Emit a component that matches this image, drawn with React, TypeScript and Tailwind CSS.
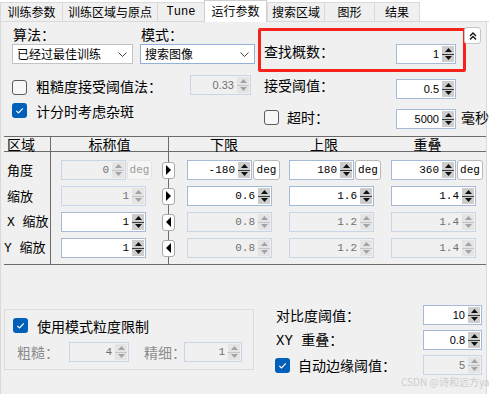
import React from "react";

const CJK = "font-['Noto_Sans_CJK_SC','Noto_Sans',sans-serif]";
const MONO = "font-['Liberation_Mono','Noto_Sans_CJK_SC',monospace]";
const LAT = "font-['Liberation_Sans','Noto_Sans_CJK_SC',sans-serif]";

function Tri({ up, off }: { up?: boolean; off?: boolean }) {
  return (
    <svg width="7" height="4" viewBox="0 0 7 4" className="block">
      <polygon points={up ? "0,4 3.5,0 7,4" : "0,0 7,0 3.5,4"} fill={off ? "#a3a3a3" : "#111"} />
    </svg>
  );
}

function SpinBtns({ off }: { off?: boolean }) {
  return (
    <div className={`mr-[1px] flex h-[16px] w-[12px] shrink-0 flex-col ${off ? "bg-[#e4e4e4]" : "bg-[#cdcdcd]"}`}>
      <div className="flex flex-1 items-center justify-center">
        <Tri up off={off} />
      </div>
      <div className={`h-px ${off ? "bg-[#c4c4c4]" : "bg-[#3c3c3c]"}`} />
      <div className="flex flex-1 items-center justify-center">
        <Tri off={off} />
      </div>
    </div>
  );
}

function Spin({ v, w, off, mono }: { v: string; w: string; off?: boolean; mono?: boolean }) {
  return (
    <div
      className={`flex h-[20px] shrink-0 items-center border ${w} ${
        off ? "border-[#c8d5e8] bg-[#f0f0f0] text-[#707070]" : "border-[#a5bad6] bg-white text-black"
      }`}
    >
      <span className={`flex-1 pr-[3px] text-right text-[11px] leading-none ${mono ? MONO : LAT}`}>{v}</span>
      <SpinBtns off={off} />
    </div>
  );
}

function Check({ on }: { on?: boolean }) {
  if (on) {
    return (
      <div className="flex h-[15px] w-[15px] shrink-0 items-center justify-center rounded-[3px] bg-[#005fb8]">
        <svg width="11" height="11" viewBox="0 0 11 11">
          <path d="M2.3 5.9 L4.5 8 L8.8 3.3" fill="none" stroke="#fff" strokeWidth="1.2" />
        </svg>
      </div>
    );
  }
  return <div className="h-[15px] w-[15px] shrink-0 rounded-[3px] border border-[#5b5b5b] bg-[#f7f7f7]" />;
}

function Combo({ text, w, focus }: { text: string; w: string; focus?: boolean }) {
  return (
    <div
      className={`flex h-[20px] shrink-0 items-center border bg-white pl-[4px] pr-[5px] ${w} ${
        focus ? "border-[#93b1d8]" : "border-[#c3c3c3]"
      }`}
    >
      <span className="flex-1 text-[12px] leading-none">{text}</span>
      <svg width="9" height="5" viewBox="0 0 9 5">
        <polyline points="0.5,0.5 4.5,4.5 8.5,0.5" fill="none" stroke="#444" />
      </svg>
    </div>
  );
}

function Deg({ w, off }: { w: string; off?: boolean }) {
  return (
    <div
      className={`flex h-[20px] shrink-0 items-center justify-center rounded-[3px] border text-[11px] leading-none ${MONO} ${w} ${
        off ? "border-[#e4e4e4] bg-[#f5f5f5] text-[#9a9a9a]" : "border-[#b8b8b8] bg-white text-black"
      }`}
    >
      deg
    </div>
  );
}

function ArrowBtn({ left }: { left?: boolean }) {
  return (
    <div className="-ml-[7px] flex h-[17px] w-[13px] shrink-0 items-center justify-center rounded-[3px] border border-[#a9a9a9] bg-white">
      <svg width="5" height="10" viewBox="0 0 5 10">
        <polygon points={left ? "5,0 0,5 5,10" : "0,0 5,5 0,10"} fill="#000" />
      </svg>
    </div>
  );
}

const tabs = [
  { t: "训练参数", w: "w-[62px]" },
  { t: "训练区域与原点", w: "w-[95px]" },
  { t: "Tune", w: "w-[47px]", mono: true },
  { t: "运行参数", w: "w-[63px]", on: true },
  { t: "搜索区域", w: "w-[57px]" },
  { t: "图形", w: "w-[50px]" },
  { t: "结果", w: "w-[46px]", last: true },
];

export default function App() {
  return (
    <div className={`relative h-[394px] w-[489px] overflow-hidden bg-white text-black ${CJK}`}>
      {/* tab strip */}
      <div className="flex h-[22px] items-end border-b border-[#d9d9d9]">
        {tabs.map((tab) =>
          tab.on ? (
            <div
              key={tab.t}
              className={`-mb-px flex h-[22px] shrink-0 items-center justify-center border-x border-t border-[#cfcfcf] bg-white pb-[2px] text-[12px] ${tab.w}`}
            >
              {tab.t}
            </div>
          ) : (
            <div
              key={tab.t}
              className={`flex h-[19px] shrink-0 items-center justify-center border-l border-t border-[#dadada] bg-[#f0f0f0] text-[12px] ${
                tab.last ? "border-r" : ""
              } ${tab.mono ? `${MONO} text-[10px]` : ""} ${tab.w}`}
            >
              {tab.t}
            </div>
          )
        )}
      </div>

      {/* page */}
      <div className="h-[372px] w-[487px] border-x border-[#d9d9d9] bg-[#f0f0f0]">
        <div className="flex h-[114px]">
          {/* left */}
          <div className="w-[256px] shrink-0">
            <div className="mt-[4px] flex h-[16px] text-[14px] leading-[16px]">
              <span className="ml-[12px] w-[128px] shrink-0">算法：</span>
              <span>模式：</span>
            </div>
            <div className="mt-[2px] flex">
              <Combo text="已经过最佳训练" w="ml-[11px] w-[121px]" />
              <Combo text="搜索图像" w="ml-[7px] w-[115px]" focus />
            </div>
            <div className="mt-[11px] flex h-[20px] items-start">
              <div className="ml-[11px] mt-[5px]">
                <Check />
              </div>
              <span className="ml-[9px] mt-[3px] w-[154px] shrink-0 text-[14px] leading-[16px]">粗糙度接受阈值法：</span>
              <Spin v="0.33" w="w-[61px]" off />
            </div>
            <div className="mt-[8px] flex h-[15px] items-center">
              <div className="ml-[11px]">
                <Check on />
              </div>
              <span className="ml-[9px] text-[14px] leading-[16px]">计分时考虑杂斑</span>
            </div>
          </div>

          {/* right */}
          <div className="flex-1">
            <div className="ml-[1px] mt-[6px] h-[44px] w-[208px] rounded-[2px] border-[3px] border-[#f5231c] pt-[12px]">
              <div className="flex items-start">
                <span className="ml-[3px] w-[132px] shrink-0 text-[14px] leading-[16px]">查找概数：</span>
                <div className="mt-[1px]">
                  <Spin v="1" w="w-[60px]" />
                </div>
              </div>
            </div>
            <div className="mt-[5px] flex items-start">
              <span className="ml-[7px] w-[132px] shrink-0 text-[14px] leading-[16px]">接受阈值：</span>
              <div className="mt-[2px]">
                <Spin v="0.5" w="w-[60px]" />
              </div>
            </div>
            <div className="mt-[9px] flex items-start">
              <div className="ml-[7px] mt-[2px]">
                <Check />
              </div>
              <span className="ml-[8px] mt-[1px] w-[109px] shrink-0 text-[14px] leading-[16px]">超时：</span>
              <div className="mt-[1px]">
                <Spin v="5000" w="w-[60px]" />
              </div>
              <span className="ml-[5px] mt-[1px] shrink-0 whitespace-nowrap text-[14px] leading-[16px]">毫秒</span>
            </div>
          </div>
        </div>

        {/* limits table */}
        <div className="ml-[3px] flex w-[482px] border-y border-[#6b6b6b]">
          <div className="w-[47px] shrink-0 border-r border-[#6b6b6b]">
            <div className="h-[15px] border-b border-[#6b6b6b] pl-[3px] text-[14px] leading-[14px]">区域</div>
            <div className="pb-[3px] pt-[5px] text-[13px]">
              <div className="flex h-[26px] items-center pl-[3px]">角度</div>
              <div className="flex h-[26px] items-center pl-[3px]">缩放</div>
              <div className="flex h-[26px] items-center pl-[3px]">
                <span className="whitespace-pre">
                  <span className={MONO}>X </span>缩放
                </span>
              </div>
              <div className="flex h-[26px] items-center">
                <span className="whitespace-pre">
                  <span className={MONO}>Y </span>缩放
                </span>
              </div>
            </div>
          </div>

          <div className="w-[118px] shrink-0 border-r border-[#6b6b6b]">
            <div className="h-[15px] border-b border-[#6b6b6b] text-center text-[14px] leading-[14px]">标称值</div>
            <div className="pb-[3px] pl-[10px] pt-[5px]">
              <div className="flex h-[26px] items-center">
                <Spin v="0" w="w-[65px]" off mono />
                <div className="ml-[1px]">
                  <Deg w="w-[25px]" off />
                </div>
              </div>
              <div className="flex h-[26px] items-center">
                <Spin v="1" w="w-[85px]" off mono />
              </div>
              <div className="flex h-[26px] items-center">
                <Spin v="1" w="w-[85px]" mono />
              </div>
              <div className="flex h-[26px] items-center">
                <Spin v="1" w="w-[85px]" mono />
              </div>
            </div>
          </div>

          <div className="flex-1">
            <div className="flex h-[15px] border-b border-[#6b6b6b] text-[14px] leading-[14px]">
              <div className="w-[110px] shrink-0 text-center">下限</div>
              <div className="w-[90px] shrink-0 text-center">上限</div>
              <div className="flex-1 text-center">重叠</div>
            </div>
            <div className="pb-[3px] pt-[5px]">
              <div className="flex h-[26px] items-center">
                <ArrowBtn />
                <div className="ml-[12px] flex items-center">
                  <Spin v="-180" w="w-[65px]" mono />
                  <div className="ml-[1px]">
                    <Deg w="w-[27px]" />
                  </div>
                  <div className="ml-[9px]">
                    <Spin v="180" w="w-[65px]" mono />
                  </div>
                  <div className="ml-[1px]">
                    <Deg w="w-[26px]" />
                  </div>
                  <div className="ml-[10px]">
                    <Spin v="360" w="w-[65px]" mono />
                  </div>
                  <div className="ml-[1px]">
                    <Deg w="w-[26px]" />
                  </div>
                </div>
              </div>
              <div className="flex h-[26px] items-center">
                <ArrowBtn />
                <div className="ml-[12px] flex items-center gap-[17px]">
                  <Spin v="0.6" w="w-[85px]" mono />
                  <Spin v="1.6" w="w-[85px]" mono />
                  <Spin v="1.4" w="w-[85px]" mono />
                </div>
              </div>
              <div className="flex h-[26px] items-center">
                <ArrowBtn left />
                <div className="ml-[12px] flex items-center gap-[17px]">
                  <Spin v="0.8" w="w-[85px]" off mono />
                  <Spin v="1.2" w="w-[85px]" off mono />
                  <Spin v="1.4" w="w-[85px]" off mono />
                </div>
              </div>
              <div className="flex h-[26px] items-center">
                <ArrowBtn left />
                <div className="ml-[12px] flex items-center gap-[17px]">
                  <Spin v="0.8" w="w-[85px]" off mono />
                  <Spin v="1.2" w="w-[85px]" off mono />
                  <Spin v="1.4" w="w-[85px]" off mono />
                </div>
              </div>
            </div>
          </div>
        </div>

        {/* bottom */}
        <div className="flex items-start">
          <div className="ml-[3px] mt-[44px] h-[61px] w-[250px] shrink-0 border border-[#dcdcdc] pl-[8px] pt-[8px]">
            <div className="flex h-[15px] items-center">
              <Check on />
              <span className="ml-[9px] text-[14px] leading-[16px]">使用模式粒度限制</span>
            </div>
            <div className="mt-[9px] flex h-[20px] items-center">
              <span className="ml-[4px] w-[52px] shrink-0 whitespace-nowrap text-[14px] leading-[16px] text-[#8c8c8c]">粗糙：</span>
              <Spin v="4" w="w-[60px]" off mono />
              <span className="ml-[15px] w-[40px] shrink-0 whitespace-nowrap text-[14px] leading-[16px] text-[#8c8c8c]">精细：</span>
              <Spin v="1" w="w-[58px]" off mono />
            </div>
          </div>

          <div className="ml-[21px] mt-[40px] flex flex-col">
            <div className="flex h-[20px] items-center">
              <span className="ml-[1px] w-[147px] shrink-0 text-[14px] leading-[16px]">对比度阈值：</span>
              <Spin v="10" w="w-[59px]" />
            </div>
            <div className="mt-[5px] flex h-[20px] items-center">
              <span className="ml-[1px] w-[147px] shrink-0 whitespace-pre text-[14px] leading-[16px]">
                <span className={MONO}>XY </span>重叠：
              </span>
              <Spin v="0.8" w="w-[59px]" />
            </div>
            <div className="mt-[5px] flex h-[20px] items-center">
              <Check on />
              <span className="ml-[8px] w-[125px] shrink-0 text-[14px] leading-[16px]">自动边缘阈值：</span>
              <Spin v="5" w="w-[59px]" off />
            </div>
          </div>
        </div>
      </div>

      {/* collapse button */}
      <div className="absolute left-[464px] top-[27px] flex h-[17px] w-[17px] items-center justify-center rounded-[3px] border border-[#c6c6c6] bg-white">
        <svg width="8" height="8" viewBox="0 0 8 8">
          <polyline points="1,4 4,1 7,4" fill="none" stroke="#111" strokeWidth="1.4" />
          <polyline points="1,7.5 4,4.5 7,7.5" fill="none" stroke="#111" strokeWidth="1.4" />
        </svg>
      </div>

      <div className="absolute left-[401px] top-[376px] whitespace-nowrap text-[10px] leading-[12px] text-[#cdcdcd]">
        CSDN @诗和远方ya
      </div>
    </div>
  );
}
